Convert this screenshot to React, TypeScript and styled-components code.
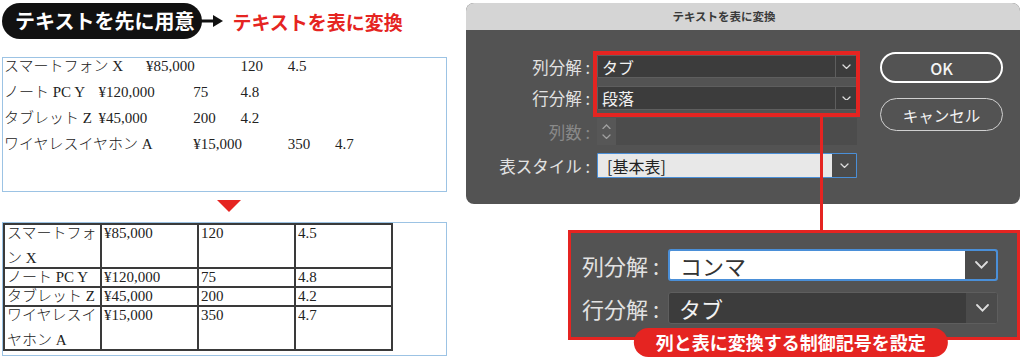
import styled, { createGlobalStyle } from 'styled-components';

const GlobalStyle = createGlobalStyle`
  body {
    margin: 0;
    background: #ffffff;
    font-family: "Noto Sans CJK JP", "Noto Sans", sans-serif;
  }
`;

const Page = styled.div`
  width: 1024px;
  height: 362px;
  box-sizing: border-box;
  padding: 3px 4px 0 2px;
  display: flex;
  gap: 19px;
  overflow: hidden;
`;

const LeftColumn = styled.section`
  width: 445px;
  display: flex;
  flex-direction: column;
`;

const Header = styled.div`
  height: 36px;
  display: flex;
  align-items: center;
`;

const StepPill = styled.div`
  height: 36px;
  box-sizing: border-box;
  padding: 0 8px 0 13px;
  border-radius: 18px;
  background: #111111;
  color: #ffffff;
  font-size: 20px;
  font-weight: 700;
  line-height: 36px;
  white-space: nowrap;
`;

const StepArrow = styled.svg`
  margin-left: -1px;
  flex: none;
`;

const StepTitle = styled.span`
  margin-left: 7px;
  color: #e52421;
  font-size: 19px;
  font-weight: 700;
  white-space: nowrap;
`;

const Frame = styled.div<{ $top: number; $height: number }>`
  margin-top: ${(p) => p.$top}px;
  height: ${(p) => p.$height}px;
  box-sizing: border-box;
  border: 1px solid #9cc3e4;
  font-family: "Liberation Serif", "Noto Sans CJK JP", serif;
  font-weight: 300;
  font-size: 15px;
  color: #222222;
`;

const TextLines = styled.div`
  padding: 0 0 0 1px;
  display: flex;
  flex-direction: column;
  gap: 10px;
`;

const TabRow = styled.div`
  display: grid;
  grid-template-columns: repeat(9, 47.3px);
  line-height: 16px;
`;

const TabItem = styled.span<{ $col: number }>`
  grid-column: ${(p) => p.$col};
  grid-row: 1;
  white-space: nowrap;
`;

const DownMarker = styled.div`
  margin: 8px 0 0 215px;
  width: 0;
  height: 0;
  border-left: 12.5px solid transparent;
  border-right: 12.5px solid transparent;
  border-top: 12px solid #e52421;
`;

const Table = styled.table`
  width: 390px;
  border-collapse: collapse;
  table-layout: fixed;
`;

const Td = styled.td`
  border: 2px solid #3a3a3a;
  padding: 0 2px;
  vertical-align: top;
`;

const CellText = styled.div`
  margin: -4px 0;
  line-height: 25px;
`;

const RightColumn = styled.section`
  position: relative;
  width: 554px;
  display: flex;
  flex-direction: column;
`;

const Dialog = styled.div`
  height: 201px;
  border-radius: 8px;
  overflow: hidden;
  display: flex;
  flex-direction: column;
  background: #535353;
`;

const TitleBar = styled.div`
  height: 27px;
  flex: none;
  background: #d5d5d5;
  color: #3a3a3a;
  font-size: 11.5px;
  font-weight: 700;
  line-height: 27px;
  text-align: center;
  padding-right: 38px;
`;

const DialogBody = styled.div`
  flex: 1;
  display: flex;
  padding: 25px 17px 0 14px;
`;

const Form = styled.div`
  display: grid;
  grid-template-columns: 110px 260px;
  grid-template-rows: 23px 24px 27px 25px;
  column-gap: 7px;
  row-gap: 8px;
  align-content: start;
`;

const Label = styled.span<{ $dim?: boolean; $big?: boolean }>`
  align-self: center;
  text-align: right;
  white-space: nowrap;
  font-size: ${(p) => (p.$big ? 22 : 16.5)}px;
  color: ${(p) => (p.$dim ? '#8a8a8a' : '#e2e2e2')};
`;

const Highlight = styled.div`
  grid-column: 2;
  grid-row: 1 / span 2;
  margin: -4px -3px -7px -4px;
  border: 4px solid #e52421;
  z-index: 1;
  pointer-events: none;
`;

type FieldKind = 'dark' | 'light' | 'white';

const fieldBg: Record<FieldKind, string> = { dark: '#3c3c3c', light: '#e8e8e8', white: '#ffffff' };
const fieldText: Record<FieldKind, string> = { dark: '#f2f2f2', light: '#222222', white: '#333333' };

const Field = styled.div<{ $kind: FieldKind; $big?: boolean; $row: number }>`
  grid-column: 2;
  grid-row: ${(p) => p.$row};
  display: flex;
  box-sizing: border-box;
  min-width: 0;
  background: ${(p) => fieldBg[p.$kind]};
  border: ${(p) => (p.$kind === 'dark' ? '1px solid #5e5e5e' : `${p.$big ? 2 : 1}px solid #4a8fd8`)};
  border-radius: ${(p) => (p.$big ? 3 : 1)}px;
  overflow: hidden;
`;

const FieldValue = styled.span<{ $kind: FieldKind; $big?: boolean }>`
  flex: 1;
  display: flex;
  align-items: center;
  padding-left: ${(p) => (p.$big ? 10 : p.$kind === 'light' ? 9 : 4)}px;
  font-size: ${(p) => (p.$big ? 22 : 16)}px;
  color: ${(p) => fieldText[p.$kind]};
  white-space: nowrap;
`;

const FieldArrow = styled.span<{ $width: number; $kind: FieldKind }>`
  width: ${(p) => p.$width}px;
  flex: none;
  display: flex;
  align-items: center;
  justify-content: center;
  background: ${(p) => (p.$kind === 'dark' ? '#3c3c3c' : '#4b4b4b')};
  border-left: 1px solid ${(p) => (p.$kind === 'dark' ? '#5e5e5e' : '#4b4b4b')};
`;

const Spinner = styled.div`
  grid-column: 2;
  grid-row: 3;
  display: flex;
  background: #4c4c4c;
`;

const SpinnerButton = styled.span`
  width: 19px;
  display: flex;
  flex-direction: column;
  align-items: center;
  justify-content: center;
  gap: 5px;
  background: #575757;
`;

const Buttons = styled.div`
  margin: -3px 0 0 23px;
  width: 123px;
  display: flex;
  flex-direction: column;
  gap: 15px;
`;

const DialogButton = styled.div<{ $primary?: boolean }>`
  height: ${(p) => (p.$primary ? 31 : 33)}px;
  box-sizing: border-box;
  border-radius: 17px;
  border: ${(p) => (p.$primary ? '2.5px solid #ffffff' : '1.5px solid #d0d0d0')};
  display: flex;
  align-items: center;
  justify-content: center;
  color: #f4f4f4;
  font-size: ${(p) => (p.$primary ? 16 : 15.5)}px;
  font-weight: ${(p) => (p.$primary ? 500 : 400)};
`;

const Connector = styled.div`
  position: absolute;
  left: 354px;
  top: 114px;
  width: 3px;
  height: 113px;
  background: #e52421;
`;

const Callout = styled.div`
  position: relative;
  margin: 26px 0 0 102px;
  height: 110px;
  box-sizing: border-box;
  border: 3px solid #e52421;
  background: #535353;
  padding: 16px 0 0 11px;
`;

const CalloutForm = styled.div`
  display: grid;
  grid-template-columns: 80px 330px;
  grid-template-rows: 32px 32px;
  column-gap: 6px;
  row-gap: 11px;
`;

const CalloutLabel = styled(Label)`
  text-align: left;
`;

const Badge = styled.div`
  position: absolute;
  left: 50%;
  bottom: -20px;
  transform: translateX(-51%);
  height: 29px;
  padding: 0 22px;
  border-radius: 15px;
  background: #e52421;
  color: #ffffff;
  font-size: 18px;
  font-weight: 700;
  line-height: 29px;
  white-space: nowrap;
`;

function Chevron({ up, size = 9, color = '#dddddd' }: { up?: boolean; size?: number; color?: string }) {
  const h = size * 0.55;
  const points = up
    ? `1,${h - 0.5} ${size / 2},1 ${size - 1},${h - 0.5}`
    : `1,1 ${size / 2},${h - 0.5} ${size - 1},1`;
  return (
    <svg width={size} height={h} viewBox={`0 0 ${size} ${h}`}>
      <polyline points={points} fill="none" stroke={color} strokeWidth={size > 10 ? 1.8 : 1.3} strokeLinecap="round" />
    </svg>
  );
}

const textRows: { text: string; col: number }[][] = [
  [
    { text: 'スマートフォン X', col: 1 },
    { text: '¥85,000', col: 4 },
    { text: '120', col: 6 },
    { text: '4.5', col: 7 },
  ],
  [
    { text: 'ノート PC Y', col: 1 },
    { text: '¥120,000', col: 3 },
    { text: '75', col: 5 },
    { text: '4.8', col: 6 },
  ],
  [
    { text: 'タブレット Z', col: 1 },
    { text: '¥45,000', col: 3 },
    { text: '200', col: 5 },
    { text: '4.2', col: 6 },
  ],
  [
    { text: 'ワイヤレスイヤホン A', col: 1 },
    { text: '¥15,000', col: 5 },
    { text: '350', col: 7 },
    { text: '4.7', col: 8 },
  ],
];

const tableRows = [
  ['スマートフォン X', '¥85,000', '120', '4.5'],
  ['ノート PC Y', '¥120,000', '75', '4.8'],
  ['タブレット Z', '¥45,000', '200', '4.2'],
  ['ワイヤレスイヤホン A', '¥15,000', '350', '4.7'],
];

function App() {
  return (
    <>
      <GlobalStyle />
      <Page>
        <LeftColumn>
          <Header>
            <StepPill>テキストを先に用意</StepPill>
            <StepArrow width="24" height="14" viewBox="0 0 24 14">
              <rect x="0" y="5.5" width="14" height="3" fill="#111111" />
              <polygon points="12,1 22,7 12,13" fill="#111111" />
            </StepArrow>
            <StepTitle>テキストを表に変換</StepTitle>
          </Header>

          <Frame $top={18} $height={135}>
            <TextLines>
              {textRows.map((row, i) => (
                <TabRow key={i}>
                  {row.map((item) => (
                    <TabItem key={item.text} $col={item.col}>
                      {item.text}
                    </TabItem>
                  ))}
                </TabRow>
              ))}
            </TextLines>
          </Frame>

          <DownMarker />

          <Frame $top={10} $height={134}>
            <Table>
              <tbody>
                {tableRows.map((row) => (
                  <tr key={row[0]}>
                    {row.map((cell) => (
                      <Td key={cell}>
                        <CellText>{cell}</CellText>
                      </Td>
                    ))}
                  </tr>
                ))}
              </tbody>
            </Table>
          </Frame>
        </LeftColumn>

        <RightColumn>
          <Dialog>
            <TitleBar>テキストを表に変換</TitleBar>
            <DialogBody>
              <Form>
                <Label style={{ gridRow: 1 }}>列分解 :</Label>
                <Field $kind="dark" $row={1}>
                  <FieldValue $kind="dark">タブ</FieldValue>
                  <FieldArrow $kind="dark" $width={20}>
                    <Chevron />
                  </FieldArrow>
                </Field>
                <Label style={{ gridRow: 2 }}>行分解 :</Label>
                <Field $kind="dark" $row={2}>
                  <FieldValue $kind="dark">段落</FieldValue>
                  <FieldArrow $kind="dark" $width={20}>
                    <Chevron />
                  </FieldArrow>
                </Field>
                <Highlight />
                <Label $dim style={{ gridRow: 3 }}>
                  列数 :
                </Label>
                <Spinner>
                  <SpinnerButton>
                    <Chevron up color="#a0a0a0" />
                    <Chevron color="#a0a0a0" />
                  </SpinnerButton>
                </Spinner>
                <Label style={{ gridRow: 4 }}>表スタイル :</Label>
                <Field $kind="light" $row={4}>
                  <FieldValue $kind="light">[基本表]</FieldValue>
                  <FieldArrow $kind="light" $width={23}>
                    <Chevron />
                  </FieldArrow>
                </Field>
              </Form>
              <Buttons>
                <DialogButton $primary>OK</DialogButton>
                <DialogButton>キャンセル</DialogButton>
              </Buttons>
            </DialogBody>
          </Dialog>

          <Connector />

          <Callout>
            <CalloutForm>
              <CalloutLabel $big style={{ gridRow: 1 }}>
                列分解 :
              </CalloutLabel>
              <Field $kind="white" $big $row={1}>
                <FieldValue $kind="white" $big>
                  コンマ
                </FieldValue>
                <FieldArrow $kind="white" $width={30}>
                  <Chevron size={13} />
                </FieldArrow>
              </Field>
              <CalloutLabel $big style={{ gridRow: 2 }}>
                行分解 :
              </CalloutLabel>
              <Field $kind="dark" $big $row={2}>
                <FieldValue $kind="dark" $big>
                  タブ
                </FieldValue>
                <FieldArrow $kind="white" $width={30}>
                  <Chevron size={13} />
                </FieldArrow>
              </Field>
            </CalloutForm>
            <Badge>列と表に変換する制御記号を設定</Badge>
          </Callout>
        </RightColumn>
      </Page>
    </>
  );
}

export default App;
